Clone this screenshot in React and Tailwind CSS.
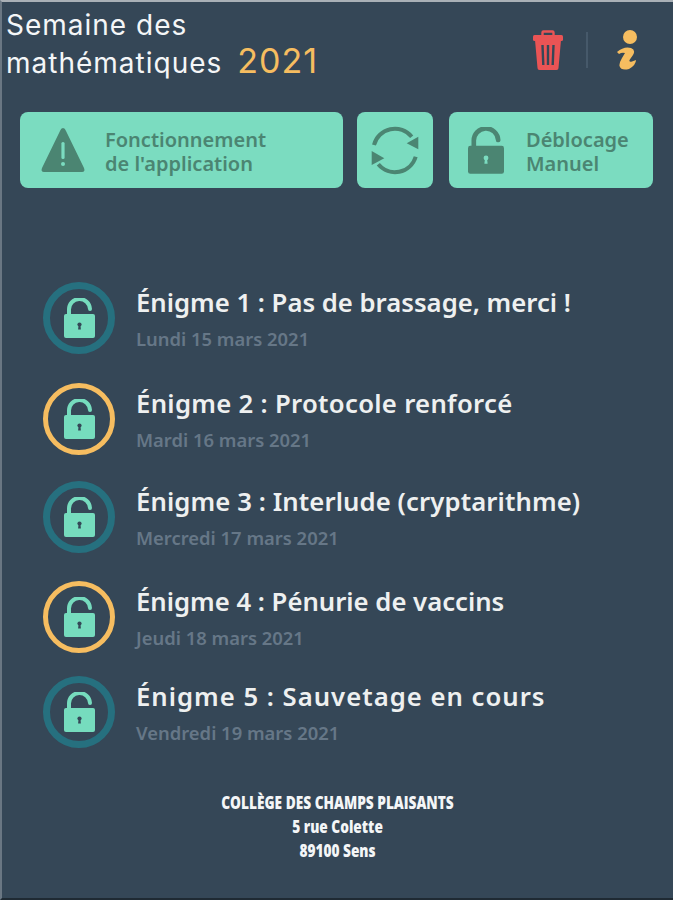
const enigmes = [
  { title: "Énigme 1 : Pas de brassage, merci !", date: "Lundi 15 mars 2021", ring: "border-[7px] border-[#26707f]", gap: "mt-0", track: "" },
  { title: "Énigme 2 : Protocole renforcé", date: "Mardi 16 mars 2021", ring: "border-[5px] border-[#f6bd60]", gap: "mt-[29px]", track: "tracking-[0.3px]" },
  { title: "Énigme 3 : Interlude (cryptarithme)", date: "Mercredi 17 mars 2021", ring: "border-[7px] border-[#26707f]", gap: "mt-[26px]", track: "tracking-[0.1px]" },
  { title: "Énigme 4 : Pénurie de vaccins", date: "Jeudi 18 mars 2021", ring: "border-[5px] border-[#f6bd60]", gap: "mt-[28px]", track: "" },
  { title: "Énigme 5 : Sauvetage en cours", date: "Vendredi 19 mars 2021", ring: "border-[7px] border-[#26707f]", gap: "mt-[23px]", track: "tracking-[1px]" },
];

function LockIcon({ className, color, hole }) {
  return (
    <svg viewBox="0 0 31 40" className={className}>
      <path d="M5 18V12a10.5 10.5 0 0 1 21-1" fill="none" stroke={color} strokeWidth="4" strokeLinecap="round" />
      <rect x="0" y="16" width="31" height="24" rx="2" fill={color} />
      <circle cx="15.5" cy="26.5" r="2.1" fill={hole} />
      <path d="M14.6 27h1.8l.5 4.5h-2.8z" fill={hole} />
    </svg>
  );
}

function Warning() {
  return (
    <svg viewBox="0 0 50 50" className="w-[50px] h-[50px]">
      <path d="M25 3 Q27 3 28 6 L46 43 Q47.5 47 44 47 H6 Q2.5 47 4 43 L22 6 Q23 3 25 3 Z" fill="#4b8572" />
      <rect x="23.4" y="17" width="3.2" height="17" rx="1.5" fill="#7bdcc0" />
      <circle cx="25" cy="39" r="2" fill="#7bdcc0" />
    </svg>
  );
}

function Refresh() {
  return (
    <svg viewBox="0 0 50 50" className="w-[50px] h-[50px]">
      <g fill="none" stroke="#4b8572" strokeWidth="4">
        <path d="M4 20A21.6 21.6 0 0 1 41.7 11.7" />
        <path d="M45.7 31.7A21.6 21.6 0 0 1 8.3 39.3" />
      </g>
      <path d="M48.3 11.7V24.3L36.7 18.3Z" fill="#4b8572" />
      <path d="M1.7 26V40L14.3 33.3Z" fill="#4b8572" />
    </svg>
  );
}

function Trash() {
  return (
    <svg viewBox="0 0 30 40" className="w-[30px] h-[40px]">
      <path d="M9.5 6V2.5a1 1 0 0 1 1-1h9a1 1 0 0 1 1 1V6" fill="none" stroke="#ea5455" strokeWidth="2.4" />
      <rect x="0" y="5" width="30" height="6" rx="1.5" fill="#ea5455" />
      <path d="M2 10H28L25.5 38a2 2 0 0 1-2 2H6.500a2 2 0 0 1-2-2Z" fill="#ea5455" />
      <path d="M9.500 15l.8 20M15 15v20M20.500 15l-.8 20" stroke="#354757" strokeWidth="2.4" />
    </svg>
  );
}

function InfoIcon() {
  return (
    <svg viewBox="0 0 22 40" className="w-[22px] h-[40px]">
      <circle cx="14" cy="7" r="7" fill="#f6bd60" />
      <path d="M1 22Q8 16 15 18Q20 20 17 25L13.500 30Q13 32.500 16 31.500L20 30Q20 35 13 39Q5 41 3.500 36Q3 33 6 28L9 23Q6 22 3 24Z" fill="#f6bd60" />
    </svg>
  );
}

function EnigmeRow({ title, date, ring, gap, track }) {
  return (
    <div className={`flex items-center ${gap}`}>
      <div className={`flex h-[72px] w-[72px] shrink-0 items-center justify-center rounded-full ${ring}`}>
        <LockIcon className="w-[31px] h-[40px] mb-[1px]" color="#76dcbe" hole="#354757" />
      </div>
      <div className="ml-[21px]">
        <div className={`text-[25.700px] leading-[32px] font-semibold text-[#eef0f0] font-['Noto_Sans',sans-serif] ${track}`}>{title}</div>
        <div className="mt-[9px] text-[18.400px] leading-[22px] font-semibold text-[#667787] font-['Noto_Sans',sans-serif]">{date}</div>
      </div>
    </div>
  );
}

export default function App() {
  return (
    <div className="flex h-[900px] w-[673px] flex-col overflow-hidden border-t-[2px] border-b-[2px] border-l-[2px] border-t-[#a9b0b6] border-b-[#1f2a33] border-l-[#6a7783] bg-[#354757]">
      {/* header */}
      <header className="flex h-[108px] items-start justify-between pl-[4px] pr-[35px] pt-[6px]">
        <h1 className="text-[28px] leading-[35px] tracking-[1px] font-normal text-[#f4f6f7] font-['Inter',sans-serif]">
          Semaine des
          <br />
          mathématiques
          <span className="ml-[15px] text-[34px] tracking-[1px] text-[#f6bd60]">2021</span>
        </h1>
        <div className="mt-[22px] flex items-center">
          <Trash />
          <div className="ml-[23px] mr-[28px] h-[36px] w-[2px] bg-[#46596a]" />
          <InfoIcon />
        </div>
      </header>

      {/* boutons */}
      <div className="mt-[2px] flex pl-[18px] pr-[18px]">
        <button className="flex h-[76px] w-[323px] items-center rounded-[8px] bg-[#7bdcc0] pl-[18px]">
          <Warning />
          <span className="ml-[17px] mt-[3px] text-left text-[20px] leading-[24px] font-semibold text-[#4b8572] font-['Noto_Sans',sans-serif]">
            Fonctionnement
            <br />
            de l'application
          </span>
        </button>
        <button className="ml-[14px] flex h-[76px] w-[76px] items-center justify-center rounded-[8px] bg-[#7bdcc0]">
          <Refresh />
        </button>
        <button className="ml-[16px] flex h-[76px] w-[204px] items-center rounded-[8px] bg-[#7bdcc0] pl-[19px]">
          <LockIcon className="w-[36px] h-[47px]" color="#4b8572" hole="#7bdcc0" />
          <span className="ml-[22px] mt-[3px] text-left text-[20px] leading-[24px] font-semibold text-[#4b8572] font-['Noto_Sans',sans-serif]">
            Déblocage
            <br />
            Manuel
          </span>
        </button>
      </div>

      {/* liste */}
      <div className="mt-[94px] pl-[41px]">
        {enigmes.map((e) => (
          <EnigmeRow key={e.title} {...e} />
        ))}
      </div>

      <footer className="mt-[42px] text-center text-[18px] leading-[24px] font-extrabold text-[#f4f6f7] font-['Open_Sans',sans-serif]">
        <div className="scale-x-[0.76]">COLLÈGE DES CHAMPS PLAISANTS</div>
        <div className="scale-x-[0.76]">5 rue Colette</div>
        <div className="scale-x-[0.76]">89100 Sens</div>
      </footer>
    </div>
  );
}
